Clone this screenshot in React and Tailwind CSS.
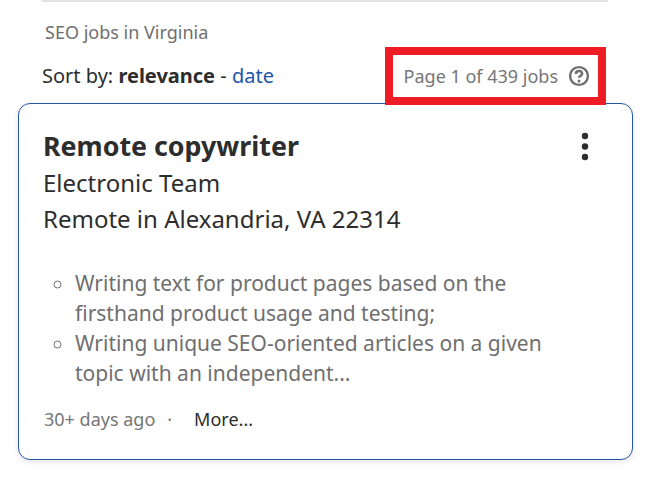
import React from "react";

const App = () => {
  return (
    <div className="relative w-[658px] h-[478px] overflow-hidden bg-white font-['Noto_Sans',sans-serif] text-[#2d2d2d]">
      <div className="ml-[42px] w-[566px] h-[2px] bg-[#e4e2e0]" />

      <p className="ml-[45px] mt-[18px] h-[24px] text-[18px] leading-[24px] text-[#6f6f6f]">
        SEO jobs in Virginia
      </p>

      <div className="mt-[20px] flex h-[24px] items-center pl-[42px] pr-[68px] justify-between">
        <div className="text-[20px] leading-[24px]">
          Sort by: <span className="font-bold">relevance</span> -{" "}
          <span className="text-[#2557a7]">date</span>
        </div>
        <div className="flex items-center gap-[10px] text-[18px] leading-[24px] text-[#767676]">
          <span>Page 1 of 439 jobs</span>
          <svg width="22" height="22" viewBox="0 0 22 22" fill="none" stroke="#6f6f6f" strokeWidth="2.4">
            <circle cx="11" cy="11" r="8.9" />
            <path d="M7.9 8.9c0-1.9 1.3-2.8 3.1-2.8s3.1 .9 3.1 2.6c0 2.2-3.1 2-3.1 4" strokeWidth="2.5" />
            <circle cx="11" cy="15.9" r="1.5" fill="#6f6f6f" stroke="none" />
          </svg>
        </div>
      </div>

      <div className="mt-[15px] ml-[18px] w-[615px] h-[357px] rounded-[12px] border border-[#2557a7] bg-white pl-[24px] pr-[40px] pt-[23px] shadow-[0_2px_6px_rgba(0,0,0,0.1)]">
        <div className="flex items-start justify-between">
          <h2 className="text-[26.8px] leading-[38px] font-bold">Remote copywriter</h2>
          <svg className="mt-[4px] mr-[3px]" width="8" height="30" viewBox="0 0 8 30" fill="#2d2d2d">
            <circle cx="4" cy="5" r="3.2" />
            <circle cx="4" cy="15.5" r="3.2" />
            <circle cx="4" cy="26" r="3.2" />
          </svg>
        </div>
        <p className="text-[24px] leading-[36px]">Electronic Team</p>
        <p className="text-[24px] leading-[36px]">Remote in Alexandria, VA 22314</p>

        <ul className="mt-[31px] list-[circle] pl-[32px] text-[21px] leading-[30px] text-[#6f6f6f]">
          <li>Writing text for product pages based on the firsthand product usage and testing;</li>
          <li>Writing unique SEO-oriented articles on a given topic with an independent...</li>
        </ul>

        <div className="mt-[19px] pl-[1px] flex items-center text-[18px] leading-[24px]">
          <span className="text-[#767676]">30+ days ago</span>
          <span className="ml-[12px] text-[#767676]">·</span>
          <span className="ml-[22px]">More...</span>
        </div>
      </div>

      <div className="absolute left-[385px] top-[47px] w-[221px] h-[58px] border-[8px] border-[#ee1c25]" />
    </div>
  );
};

export default App;
